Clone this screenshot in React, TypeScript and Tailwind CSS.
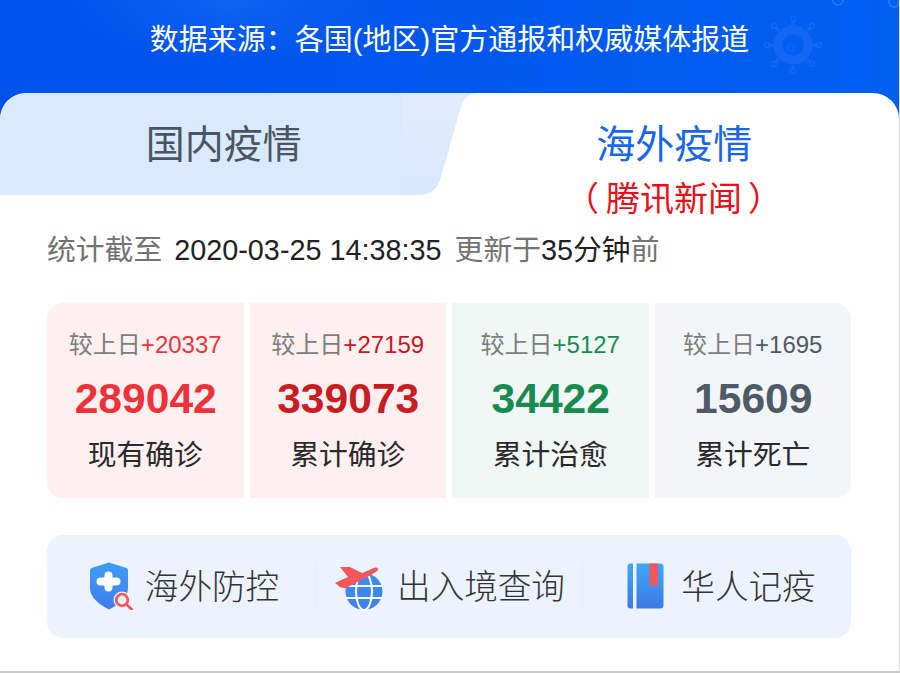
const stats = [
  { delta: "+20337", total: "289042", label: "现有确诊", bg: "bg-[#fef0f0]", deltaColor: "text-[#e8363d]", totalColor: "text-[#ee3239]", corner: "rounded-l-2xl" },
  { delta: "+27159", total: "339073", label: "累计确诊", bg: "bg-[#fef0f0]", deltaColor: "text-[#c4191f]", totalColor: "text-[#c81e23]", corner: "" },
  { delta: "+5127", total: "34422", label: "累计治愈", bg: "bg-[#f0f7f4]", deltaColor: "text-[#178b50]", totalColor: "text-[#178b50]", corner: "" },
  { delta: "+1695", total: "15609", label: "累计死亡", bg: "bg-[#f2f6f8]", deltaColor: "text-[#4e5a65]", totalColor: "text-[#4e5a65]", corner: "rounded-r-2xl" },
];

const ShieldIcon = () => (
  <svg width="43" height="48" viewBox="0 0 43 48" className="shrink-0">
    <defs>
      <linearGradient id="shieldFill" x1="0" y1="0" x2="0" y2="1">
        <stop offset="0" stopColor="#3f9df6" />
        <stop offset="1" stopColor="#3f7dec" />
      </linearGradient>
    </defs>
    <path d="M19 0.500 L36.500 6 Q38 6.500 38 8.500 L38 26 Q38 38 19 47.500 Q0 38 0 26 L0 8.500 Q0 6.500 1.500 6 Z" fill="url(#shieldFill)" />
    <path d="M18.500 13.500 V25.500 M10.500 19.500 H26.500" stroke="#fff" strokeWidth="8" strokeLinecap="round" />
    <circle cx="32" cy="38" r="8.500" fill="#edf3fe" />
    <circle cx="32" cy="38" r="5.800" fill="none" stroke="#f2595e" strokeWidth="2.800" />
    <path d="M36.500 42.500 L41.500 47" stroke="#f2595e" strokeWidth="3" strokeLinecap="round" />
  </svg>
);

const PlaneGlobeIcon = () => (
  <svg width="50" height="48" viewBox="0 0 50 48" className="shrink-0">
    <defs>
      <linearGradient id="globeFill" x1="0" y1="0" x2="0" y2="1">
        <stop offset="0" stopColor="#3d8ff0" />
        <stop offset="1" stopColor="#3f80ea" />
      </linearGradient>
    </defs>
    <circle cx="29" cy="28.500" r="18.500" fill="url(#globeFill)" />
    <ellipse cx="29" cy="28.500" rx="8" ry="18.500" fill="none" stroke="#fff" strokeWidth="2" />
    <path d="M10.500 23 H47.500 M10.500 35 H47.500" stroke="#fff" strokeWidth="2" />
    <path d="M5 4 L15 4 L27 10 L40 4.500 Q44 4 43 7 Q40 10.500 26 17 L11 25 Q8 25.500 5 24 L0 20 L5 17.500 L13 14 Z" fill="#f4575b" />
  </svg>
);

const BookIcon = () => (
  <svg width="37" height="46" viewBox="0 0 37 46" className="shrink-0">
    <defs>
      <linearGradient id="bookFill" x1="0" y1="0" x2="0" y2="1">
        <stop offset="0" stopColor="#3ea8fb" />
        <stop offset="1" stopColor="#3d78e6" />
      </linearGradient>
    </defs>
    <path d="M6 0.500 V45.500 H3.500 Q0.500 45.500 0.500 42.500 V3.500 Q0.500 0.500 3.500 0.500 Z" fill="url(#bookFill)" />
    <path d="M9.500 0.500 H33 Q36.500 0.500 36.500 4 V42 Q36.500 45.500 33 45.500 H9.500 Z" fill="url(#bookFill)" />
    <path d="M22.500 0.500 H31 V24 L26.800 21.500 L22.500 24 Z" fill="#f4575b" />
  </svg>
);

// faint virus printed on the header background
const VirusMark = () => (
  <svg width="60" height="60" viewBox="0 0 60 60" className="absolute left-[763px] top-[15px]">
    <g fill="none" stroke="#1566f3">
      <circle cx="30" cy="30" r="15" strokeWidth="9" />
      <circle cx="28" cy="33" r="3.500" strokeWidth="1.200" />
      <path d="M30 10 V5 M30 50 V55 M10 30 H5 M50 30 H55 M16 16 L12 12 M44 16 L48 12 M16 44 L12 48 M44 44 L48 48" strokeWidth="3" />
      <circle cx="30" cy="4" r="2.500" strokeWidth="1.500" />
      <circle cx="11" cy="11" r="2.500" strokeWidth="1.500" />
      <circle cx="49" cy="11" r="2.500" strokeWidth="1.500" />
      <circle cx="4" cy="30" r="2.500" strokeWidth="1.500" />
      <circle cx="56" cy="30" r="2.500" strokeWidth="1.500" />
      <circle cx="11" cy="49" r="2.500" strokeWidth="1.500" />
      <circle cx="49" cy="49" r="2.500" strokeWidth="1.500" />
      <circle cx="30" cy="56" r="2.500" strokeWidth="1.500" />
    </g>
  </svg>
);

export default function App() {
  return (
    <div className="relative h-[673px] w-[900px] overflow-hidden border-b-2 border-r border-b-[#c9c9c9] border-r-[#dcdcdc] bg-white [font-family:'Liberation_Sans','Noto_Sans_CJK_SC',sans-serif]">
      <div className="absolute left-0 top-0 h-[130px] w-full bg-[radial-gradient(ellipse_160px_60px_at_230px_0px,#0f62f1_0%,transparent_100%),linear-gradient(90deg,#0052ec_0%,#0057ee_50%,#0060f4_100%)]">
        <VirusMark />
        <div className="absolute left-[832px] top-[-6px] size-[12px] rounded-full border-2 border-[#2a76f5]" />
        <div className="absolute left-[888px] top-[-4px] size-[12px] rounded-full border-2 border-[#2a76f5]" />
      </div>

      <header className="relative flex h-[93px] items-start justify-center pt-[19px]">
        <p className="text-[29px] leading-[42px] text-white">数据来源：各国(地区)官方通报和权威媒体报道</p>
      </header>

      <div className="relative rounded-t-[26px] bg-white">
        <nav className="relative grid h-[102px] grid-cols-2">
          <div className="absolute inset-0 rounded-tl-[26px] bg-[linear-gradient(90deg,#dbe9fe_402px,transparent_402px),linear-gradient(180deg,#e1ecfe,#d9e8ff)] [clip-path:path('M0_26Q4_0_30_0L476_0Q464_1_460_17L440_87Q435_102_418_102L0_102Z')]" />
          <div className="relative flex items-center justify-center pr-[2px] pt-[2px] text-[39px] text-[#4a5562]">国内疫情</div>
          <div className="relative flex items-center justify-center pt-[2px] text-[39px] text-[#1a66e8]">海外疫情</div>
          <span className="absolute left-[565px] top-[88px] text-[34px] leading-[36px] text-[#e8101a]">（<span className="ml-[7px]">腾讯新闻</span><span className="ml-[6px]">）</span></span>
        </nav>

        <div className="pl-[47px] pr-[48px]">
          <p className="mt-[36px] flex h-[40px] items-center whitespace-pre text-[28.8px] text-[#737373]">
            统计截至<span className="ml-[12px] text-[#222]">2020-03-25 14:38:35</span>
            <span className="ml-[13px]">更新于</span>
            <span className="text-[#222]">35分钟</span>前
          </p>

          <div className="mt-[32px] grid h-[195px] grid-cols-4 gap-[6px]">
            {stats.map((s) => (
              <div key={s.label} className={`flex flex-col items-center pt-[25px] ${s.bg} ${s.corner}`}>
                <p className="text-[24px] leading-[34px] text-[#7d7d7d]">
                  较上日<span className={s.deltaColor}>{s.delta}</span>
                </p>
                <p className={`mt-[12px] pl-[1px] text-[42.600px] font-bold leading-[48px] ${s.totalColor}`}>{s.total}</p>
                <p className="mt-[13px] text-[28.8px] leading-[40px] text-[#2a2a2a]">{s.label}</p>
              </div>
            ))}
          </div>

          <div className="mt-[37px] grid h-[103px] grid-cols-3 items-center rounded-2xl bg-[#edf3fe]">
            <div className="flex items-center justify-center gap-[12px] pl-[7px]">
              <ShieldIcon />
              <span className="pt-[3px] text-[33.6px] font-light text-[#333]">海外防控</span>
            </div>
            <div className="flex h-[47px] items-center justify-center gap-[12px] border-x border-[#e6edf8] pl-[2px]">
              <PlaneGlobeIcon />
              <span className="pt-[3px] text-[33.6px] font-light text-[#333]">出入境查询</span>
            </div>
            <div className="flex items-center justify-center gap-[17px] pl-[9px]">
              <BookIcon />
              <span className="pt-[3px] text-[33.6px] font-light text-[#333]">华人记疫</span>
            </div>
          </div>
        </div>
      </div>
    </div>
  );
}
